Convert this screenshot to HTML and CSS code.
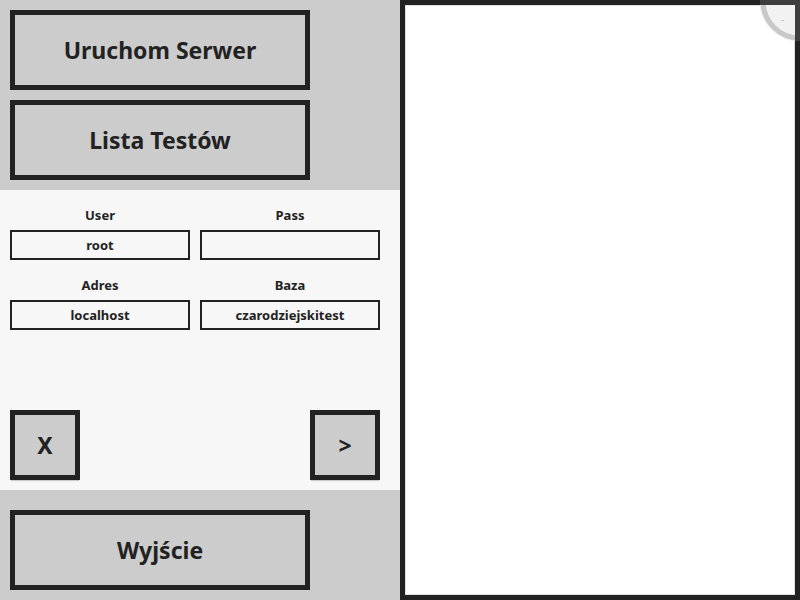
FILE: index.html
```
<!DOCTYPE html>
<html lang="pl">
<head>
<meta charset="utf-8">
<title>Serwer</title>
<link rel="stylesheet" href="styles.css">
</head>
<body>
<main class="app">
  <section class="side">
    <nav class="band band-top">
      <button class="btn" type="button">Uruchom Serwer</button>
      <button class="btn" type="button">Lista Testów</button>
    </nav>
    <form class="config">
      <div class="fields">
        <label class="field">User<input type="text" value="root"></label>
        <label class="field">Pass<input type="password"></label>
        <label class="field">Adres<input type="text" value="localhost"></label>
        <label class="field">Baza<input type="text" value="czarodziejskitest"></label>
      </div>
      <div class="actions">
        <button class="btn btn-square" type="button">X</button>
        <button class="btn btn-square" type="button">&gt;</button>
      </div>
    </form>
    <div class="band band-bottom">
      <button class="btn" type="button">Wyjście</button>
    </div>
  </section>
  <section class="output">
    <svg class="corner" viewBox="0 0 40 41" aria-hidden="true">
      <circle cx="40" cy="1" r="37" fill="#f2f2f2" stroke="#eee" stroke-width="7"/>
      <circle cx="40" cy="1" r="37" fill="#f2f2f2" stroke="#c8c8c8" stroke-width="5"/>
      <path d="M21 20.500h3" stroke="#ccc" stroke-width="1"/>
      <path d="M0 0H40V41H35V5H0Z" fill="#3e3e3e"/>
    </svg>
  </section>
</main>
</body>
</html>
```
FILE: styles.css
```
* { box-sizing: border-box; }
body {
  margin: 0;
  font-family: "Noto Sans", "Open Sans", sans-serif;
  font-weight: 700;
  color: #222;
}
.app {
  display: grid;
  grid-template-columns: 1fr 1fr;
  min-height: 100vh;
}
.side {
  display: flex;
  flex-direction: column;
  background: #f7f7f7;
}
.band {
  display: flex;
  flex-direction: column;
  gap: 10px;
  padding: 10px;
  background: #ccc;
}
.band-bottom { padding-top: 20px; }
.btn {
  width: 300px;
  max-width: 100%;
  height: 80px;
  padding: 0;
  border: 5px solid #222;
  background: #ccc;
  color: inherit;
  font: inherit;
  font-size: 23px;
}
.config {
  flex: 1;
  display: flex;
  flex-direction: column;
  justify-content: space-between;
  padding: 10px 20px 10px 10px;
}
.fields {
  display: grid;
  grid-template-columns: 1fr 1fr;
  gap: 10px;
}
.field {
  min-width: 0;
  font-size: 13px;
  line-height: 30px;
  text-align: center;
}
.field input {
  display: block;
  width: 100%;
  height: 30px;
  padding: 0 4px;
  border: 2px solid #222;
  border-radius: 0;
  background: #f7f7f7;
  color: inherit;
  font: inherit;
  line-height: 20px;
  text-align: center;
}
.actions {
  display: flex;
  justify-content: space-between;
}
.btn-square {
  width: 70px;
  height: 70px;
  box-shadow: 0 2px 1px -1px #ccc;
}
.output {
  position: relative;
  border: 5px solid #222;
  background: #fff;
  box-shadow: inset 0 0 0 1px #ddd;
}
.corner {
  position: absolute;
  top: -5px;
  right: -5px;
  width: 40px;
  height: 41px;
}
```
